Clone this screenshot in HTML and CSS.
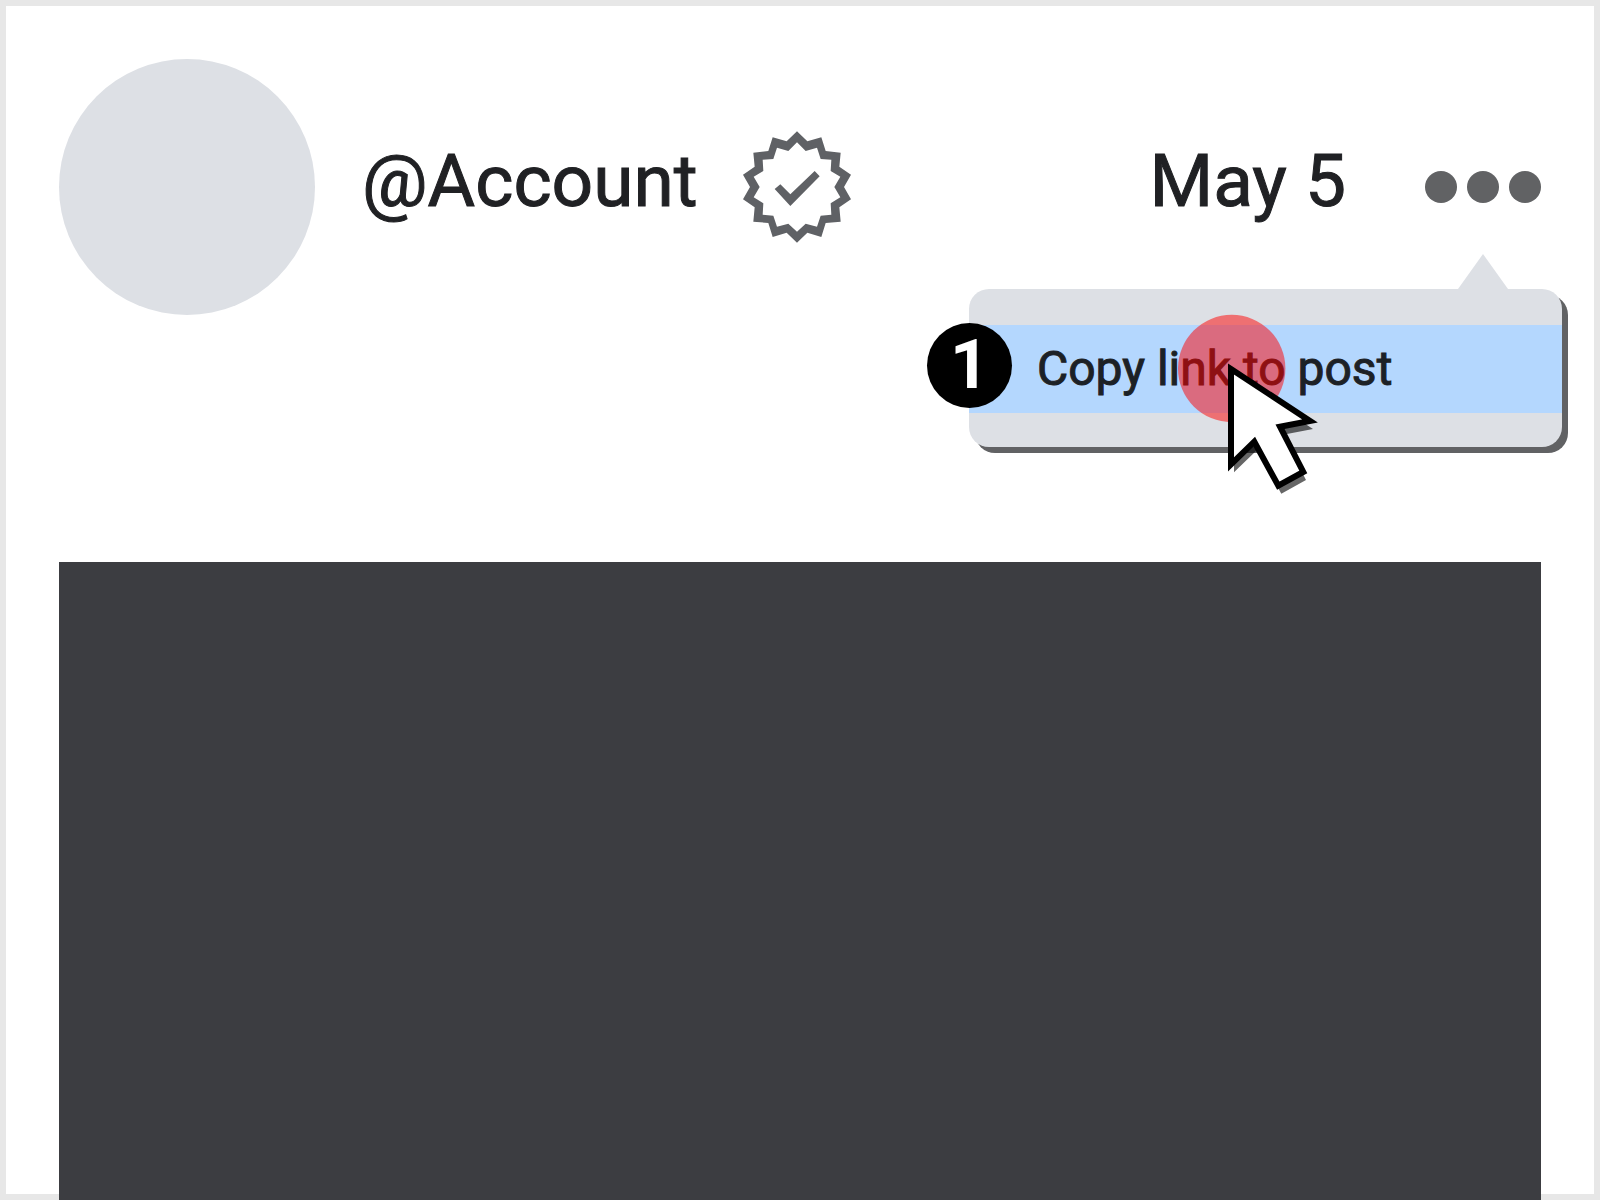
FILE: index.html
```html
<!DOCTYPE html>
<html lang="en">
<head>
<meta charset="utf-8">
<meta name="viewport" content="width=device-width, initial-scale=1">
<title>Copy link to post</title>
<link rel="stylesheet" href="styles.css">
</head>
<body>
<article class="post">
  <header class="post-header">
    <div class="avatar"></div>
    <span class="label">@Account</span>
    <svg class="verified" viewBox="66 60 330 342" aria-hidden="true">
      <path fill-rule="evenodd" d="M231 64L262 94L304 82L317 123L362 128L358 170L393 194L372 231L393 268L358 292L362 335L317 339L304 381L262 368L231 398L200 368L158 381L145 339L100 335L104 292L69 268L90 231L69 194L104 170L100 128L145 123L158 82L200 94ZM231 97L257 123L291 113L302 147L334 149L332 183L361 200L343 231L361 262L332 280L334 314L302 317L291 350L257 341L231 365L205 341L171 350L160 317L128 314L130 280L101 262L119 231L101 200L130 183L128 149L160 147L171 113L205 123Z"/>
      <path d="M164 237L181 223L211 253L284 183L299 199L211 288Z"/>
    </svg>
    <time class="label date">May 5</time>
    <div class="more">
      <button class="more-button" type="button" aria-label="More options">
        <span class="dot"></span><span class="dot"></span><span class="dot"></span>
      </button>
      <div class="menu">
        <button class="menu-item" type="button">Copy link to post</button>
        <span class="step">1</span>
        <svg class="pointer" viewBox="0 0 142 180" aria-hidden="true">
          <circle class="click" cx="53.7" cy="53.5" r="53.7"/>
          <path class="cursor-shadow" d="M56 62L135 114L105 119.7L128 165L103.3 178.7L79.3 134.7L56 157.3Z"/>
          <path class="cursor" d="M53 54L132 106L102 111.7L125.3 157L100.3 170.7L76.3 126.7L53 149.3Z"/>
        </svg>
      </div>
    </div>
  </header>
  <div class="media"></div>
</article>
</body>
</html>
```

FILE: styles.css
```css
* {
  box-sizing: border-box;
}

body {
  margin: 0;
  font-family: Roboto, "Liberation Sans", sans-serif;
  font-weight: 400;
  color: #202124;
  background: #fff;
}

.post {
  display: flex;
  flex-direction: column;
  gap: 247px;
  min-height: 100vh;
  padding: 53px 53px 0;
  border: 6px solid #e7e7e7;
}

.post-header {
  display: flex;
  align-items: center;
}

.avatar {
  width: 256px;
  height: 256px;
  margin-right: 47px;
  border-radius: 50%;
  background: #dde0e5;
}

.label {
  padding-bottom: 12px;
  font-size: 73px;
  line-height: 84px;
  white-space: nowrap;
  -webkit-text-stroke: 1px currentColor;
}

.verified {
  width: 110px;
  height: 114px;
  margin-left: 44px;
  fill: #5f6165;
}

.date {
  margin-left: auto;
}

.more {
  position: relative;
  margin-left: 79px;
}

.more-button {
  display: flex;
  gap: 10px;
  padding: 0;
  border: 0;
  background: none;
}

.dot {
  width: 32px;
  height: 32px;
  border-radius: 50%;
  background: #616264;
}

.menu {
  position: absolute;
  top: 118px;
  right: -21px;
  width: 593px;
  padding: 36px 0 34px;
  border-radius: 20px;
  background: #dde0e5;
  box-shadow: 6px 6px 0 #616264;
}

.menu::before {
  content: "";
  position: absolute;
  right: 54px;
  bottom: 100%;
  width: 50px;
  height: 35px;
  background: #dde0e5;
  clip-path: polygon(50% 0, 100% 100%, 0 100%);
}

.menu-item {
  display: block;
  width: 100%;
  padding: 16px 68px;
  border: 0;
  background: #b4d7fe;
  color: #1c2126;
  font: inherit;
  font-size: 48px;
  line-height: 56px;
  text-align: left;
  white-space: nowrap;
  -webkit-text-stroke: 1px currentColor;
}

.step {
  position: absolute;
  top: 34px;
  left: -42px;
  width: 85px;
  height: 85px;
  border-radius: 50%;
  background: #000;
  color: #fff;
  font-size: 68px;
  font-weight: 700;
  line-height: 85px;
  text-align: center;
}

.pointer {
  position: absolute;
  top: 26px;
  left: 209px;
  width: 142px;
  height: 180px;
  overflow: visible;
  pointer-events: none;
}

.click {
  fill: rgba(255, 0, 0, 0.5);
}

.cursor-shadow {
  fill: rgba(0, 0, 0, 0.6);
}

.cursor {
  fill: #fff;
  stroke: #000;
  stroke-width: 6;
  stroke-miterlimit: 10;
}

.media {
  flex: 1;
  min-height: 320px;
  margin-bottom: -6px;
  background: #3c3d41;
}
```
